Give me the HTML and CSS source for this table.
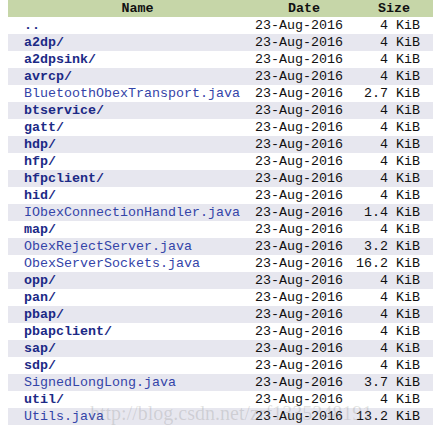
FILE: index.html
```html
<!DOCTYPE html>
<html>
<head>
<meta charset="utf-8">
<link rel="stylesheet" href="styles.css">
</head>
<body>
<div class="wrap">
<table class="list">
<thead>
<tr><th class="c-name">Name</th><th class="c-date">Date</th><th class="c-size">Size</th></tr>
</thead>
<tbody>
<tr><td class="c-name"><a class="dir">..</a></td><td class="c-date">23-Aug-2016</td><td class="c-size">4 KiB</td></tr>
<tr><td class="c-name"><a class="dir">a2dp/</a></td><td class="c-date">23-Aug-2016</td><td class="c-size">4 KiB</td></tr>
<tr><td class="c-name"><a class="dir">a2dpsink/</a></td><td class="c-date">23-Aug-2016</td><td class="c-size">4 KiB</td></tr>
<tr><td class="c-name"><a class="dir">avrcp/</a></td><td class="c-date">23-Aug-2016</td><td class="c-size">4 KiB</td></tr>
<tr><td class="c-name"><a class="file">BluetoothObexTransport.java</a></td><td class="c-date">23-Aug-2016</td><td class="c-size">2.7 KiB</td></tr>
<tr><td class="c-name"><a class="dir">btservice/</a></td><td class="c-date">23-Aug-2016</td><td class="c-size">4 KiB</td></tr>
<tr><td class="c-name"><a class="dir">gatt/</a></td><td class="c-date">23-Aug-2016</td><td class="c-size">4 KiB</td></tr>
<tr><td class="c-name"><a class="dir">hdp/</a></td><td class="c-date">23-Aug-2016</td><td class="c-size">4 KiB</td></tr>
<tr><td class="c-name"><a class="dir">hfp/</a></td><td class="c-date">23-Aug-2016</td><td class="c-size">4 KiB</td></tr>
<tr><td class="c-name"><a class="dir">hfpclient/</a></td><td class="c-date">23-Aug-2016</td><td class="c-size">4 KiB</td></tr>
<tr><td class="c-name"><a class="dir">hid/</a></td><td class="c-date">23-Aug-2016</td><td class="c-size">4 KiB</td></tr>
<tr><td class="c-name"><a class="file">IObexConnectionHandler.java</a></td><td class="c-date">23-Aug-2016</td><td class="c-size">1.4 KiB</td></tr>
<tr><td class="c-name"><a class="dir">map/</a></td><td class="c-date">23-Aug-2016</td><td class="c-size">4 KiB</td></tr>
<tr><td class="c-name"><a class="file">ObexRejectServer.java</a></td><td class="c-date">23-Aug-2016</td><td class="c-size">3.2 KiB</td></tr>
<tr><td class="c-name"><a class="file">ObexServerSockets.java</a></td><td class="c-date">23-Aug-2016</td><td class="c-size">16.2 KiB</td></tr>
<tr><td class="c-name"><a class="dir">opp/</a></td><td class="c-date">23-Aug-2016</td><td class="c-size">4 KiB</td></tr>
<tr><td class="c-name"><a class="dir">pan/</a></td><td class="c-date">23-Aug-2016</td><td class="c-size">4 KiB</td></tr>
<tr><td class="c-name"><a class="dir">pbap/</a></td><td class="c-date">23-Aug-2016</td><td class="c-size">4 KiB</td></tr>
<tr><td class="c-name"><a class="dir">pbapclient/</a></td><td class="c-date">23-Aug-2016</td><td class="c-size">4 KiB</td></tr>
<tr><td class="c-name"><a class="dir">sap/</a></td><td class="c-date">23-Aug-2016</td><td class="c-size">4 KiB</td></tr>
<tr><td class="c-name"><a class="dir">sdp/</a></td><td class="c-date">23-Aug-2016</td><td class="c-size">4 KiB</td></tr>
<tr><td class="c-name"><a class="file">SignedLongLong.java</a></td><td class="c-date">23-Aug-2016</td><td class="c-size">3.7 KiB</td></tr>
<tr><td class="c-name"><a class="dir">util/</a></td><td class="c-date">23-Aug-2016</td><td class="c-size">4 KiB</td></tr>
<tr><td class="c-name"><a class="file">Utils.java</a></td><td class="c-date">23-Aug-2016</td><td class="c-size">13.2 KiB</td></tr>
</tbody>
</table>
<div class="watermark">http://blog.csdn.net/zrf1335348191</div>
</div>
</body>
</html>
```
FILE: styles.css
```css
html, body {
  margin: 0;
  padding: 0;
  background: #ffffff;
}
.wrap {
  position: relative;
  padding-left: 8px;
}
.list {
  border-collapse: collapse;
  width: 425px;
  font-family: "Liberation Mono", "Courier New", monospace;
  font-size: 13.33px;
  color: #111111;
}
.list th, .list td {
  height: 17px;
  padding: 0;
  line-height: 17px;
  white-space: nowrap;
}
.list thead tr {
  background: #c6d6a8;
}
.list th {
  font-weight: bold;
  color: #111111;
}
.list th.c-name { text-align: center; padding-left: 12px; }
.list th.c-date { text-align: left; padding-left: 33px; }
.list th.c-size { text-align: left; padding-left: 31px; }
.list tbody tr:nth-child(even) {
  background: #e7e7ef;
}
.list td.c-name {
  width: 231px;
  padding-left: 16px;
}
.list td.c-date {
  width: 92px;
  padding-left: 0;
}
.list td.c-size {
  text-align: right;
  padding-right: 13px;
}
.dir {
  color: #1c2a86;
  font-weight: bold;
}
.file {
  color: #3344a8;
}
.watermark {
  position: absolute;
  left: 90px;
  top: 402px;
  font-family: "Liberation Serif", "Times New Roman", serif;
  font-size: 20px;
  color: rgba(120, 120, 120, 0.22);
  pointer-events: none;
  white-space: nowrap;
}
```
